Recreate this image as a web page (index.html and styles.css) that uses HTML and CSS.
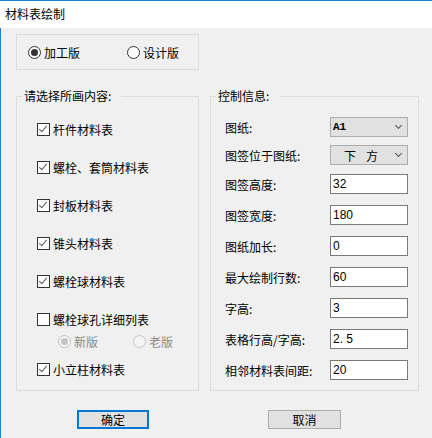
FILE: index.html
```html
<!DOCTYPE html>
<html lang="zh-CN">

<head>
    <meta charset="UTF-8">
    <meta name="viewport" content="width=device-width, initial-scale=1.0">
    <title>材料表绘制</title>
    <link rel="stylesheet" href="styles.css">
</head>

<body>
    <div class="titlebar">材料表绘制</div>
    <div class="client">
        <div class="version-box">
            <div class="radio"><span class="dot on"></span>加工版</div>
            <div class="radio"><span class="dot"></span>设计版</div>
        </div>

        <div class="groups">
            <fieldset class="group group-left">
                <legend>请选择所画内容:</legend>
                <div class="check-list">
                    <div class="check"><span class="box on"></span>杆件材料表</div>
                    <div class="check"><span class="box on"></span>螺栓、套筒材料表</div>
                    <div class="check"><span class="box on"></span>封板材料表</div>
                    <div class="check"><span class="box on"></span>锥头材料表</div>
                    <div class="check"><span class="box on"></span>螺栓球材料表</div>
                    <div class="check"><span class="box"></span>螺栓球孔详细列表</div>
                    <div class="sub-radios">
                        <div class="radio disabled"><span class="dot on"></span>新版</div>
                        <div class="radio disabled"><span class="dot"></span>老版</div>
                    </div>
                    <div class="check last"><span class="box on"></span>小立柱材料表</div>
                </div>
            </fieldset>

            <fieldset class="group group-right">
                <legend>控制信息:</legend>
                <div class="form-rows">
                    <div class="row">
                        <span class="label">图纸:</span>
                        <div class="select"><span class="mono">A1</span><span class="chevron"></span></div>
                    </div>
                    <div class="row">
                        <span class="label">图签位于图纸:</span>
                        <div class="select"><span class="spaced">下方</span><span class="chevron"></span></div>
                    </div>
                </div>
                <div class="form-rows inputs">
                    <div class="row"><span class="label">图签高度:</span><div class="input">32</div></div>
                    <div class="row"><span class="label">图签宽度:</span><div class="input">180</div></div>
                    <div class="row"><span class="label">图纸加长:</span><div class="input">0</div></div>
                    <div class="row"><span class="label">最大绘制行数:</span><div class="input">60</div></div>
                    <div class="row"><span class="label">字高:</span><div class="input">3</div></div>
                    <div class="row"><span class="label">表格行高/字高:</span><div class="input">2. 5</div></div>
                    <div class="row"><span class="label">相邻材料表间距:</span><div class="input">20</div></div>
                </div>
            </fieldset>
        </div>

        <div class="buttons">
            <button type="button" class="button default">确定</button>
            <button type="button" class="button">取消</button>
        </div>
    </div>
</body>

</html>
```

FILE: styles.css
```css
body {
    margin: 0;
    width: 432px;
    height: 438px;
    overflow: hidden;
    background-color: #f0f0f0;
    color: #000;
    font-family: "Noto Sans CJK SC", "Liberation Sans", sans-serif;
    font-size: 12px;
}

.titlebar {
    height: 27px;
    line-height: 26px;
    border-top: 1px solid #1883d7;
    background-color: #fff;
    padding-left: 5px;
}

.client {
    border-left: 1px solid #1883d7;
    height: 410px;
    box-sizing: border-box;
    padding-left: 15px;
    padding-top: 6px;
}

/* top version box */
.version-box {
    width: 183px;
    height: 36px;
    box-sizing: border-box;
    border: 1px solid #dcdcdc;
    display: flex;
    align-items: center;
    padding-left: 11px;
}

.radio {
    display: flex;
    align-items: center;
    flex-shrink: 0;
    width: 99px;
    line-height: 13px;
}

.dot {
    width: 13px;
    height: 13px;
    box-sizing: border-box;
    border: 1px solid #333;
    border-radius: 50%;
    background-color: #fff;
    margin-right: 3px;
    display: flex;
    align-items: center;
    justify-content: center;
}

.dot.on::after {
    content: "";
    width: 7px;
    height: 7px;
    border-radius: 50%;
    background-color: #333;
}

.radio.disabled {
    width: 75px;
    color: #8a8a8a;
}

.radio.disabled .dot {
    border-color: #c4c4c4;
    background-color: #f4f4f4;
}

.radio.disabled .dot.on::after {
    background-color: #c4c4c4;
}

/* group boxes */
.groups {
    display: flex;
    gap: 11px;
    margin-top: 19px;
}

.group {
    margin: 0;
    padding: 0;
    min-width: 0;
    flex-shrink: 0;
    height: 302px;
    box-sizing: border-box;
    border: 1px solid #dcdcdc;
}

.group legend {
    margin-left: 5px;
    padding: 0 10px 0 2px;
    line-height: 14px;
}

.group-left {
    width: 183px;
}

.group-right {
    width: 209px;
}

.group-right legend {
    padding-right: 11px;
}

.check-list {
    padding: 20px 0 0 20px;
    display: flex;
    flex-direction: column;
}

.check {
    display: flex;
    align-items: center;
    line-height: 13px;
    height: 13px;
    margin-bottom: 25px;
}

.box {
    width: 13px;
    height: 13px;
    box-sizing: border-box;
    border: 1px solid #333;
    background-color: #fff;
    margin-right: 3px;
    position: relative;
}

.box.on::after {
    content: "";
    position: absolute;
    left: 3px;
    top: 0px;
    width: 3px;
    height: 7px;
    border-right: 1.5px solid #555;
    border-bottom: 1.5px solid #555;
    transform: rotate(40deg);
}

.sub-radios {
    display: flex;
    margin: -16px 0 15px 21px;
}

.check.last {
    margin-bottom: 0;
}

/* right side form */
.form-rows {
    padding: 14px 0 0 14px;
    display: flex;
    flex-direction: column;
    gap: 8px;
}

.form-rows.inputs {
    padding-top: 9px;
    gap: 11px;
}

.row {
    display: flex;
    align-items: center;
    height: 20px;
}

.label {
    width: 105px;
    flex-shrink: 0;
}

.select {
    width: 78px;
    height: 20px;
    box-sizing: border-box;
    border: 1px solid #adadad;
    background-color: #e1e1e1;
    display: flex;
    align-items: center;
    justify-content: space-between;
    padding: 0 6px 0 2px;
}

.mono {
    font-family: "Liberation Mono", monospace;
    font-weight: bold;
    font-size: 11px;
}

.spaced {
    padding-left: 11px;
    letter-spacing: 10px;
}

.chevron {
    width: 4px;
    height: 4px;
    border-right: 1px solid #555;
    border-bottom: 1px solid #555;
    transform: rotate(45deg);
    margin-top: -3px;
}

.input {
    width: 78px;
    height: 20px;
    box-sizing: border-box;
    border: 1px solid #7a7a7a;
    background-color: #fff;
    padding-left: 2px;
    line-height: 18px;
    font-family: "Liberation Sans", sans-serif;
    font-size: 12px;
}

/* bottom buttons */
.buttons {
    display: flex;
    gap: 119px;
    margin-top: 19px;
    padding-left: 61px;
}

.button {
    width: 73px;
    height: 19px;
    box-sizing: border-box;
    padding: 0;
    background-color: #e1e1e1;
    border: 1px solid #adadad;
    font-family: "Noto Sans CJK SC", sans-serif;
    font-size: 12px;
    line-height: 16px;
    color: #000;
}

.button.default {
    width: 72px;
    border: 2px solid #0078d7;
}
```
